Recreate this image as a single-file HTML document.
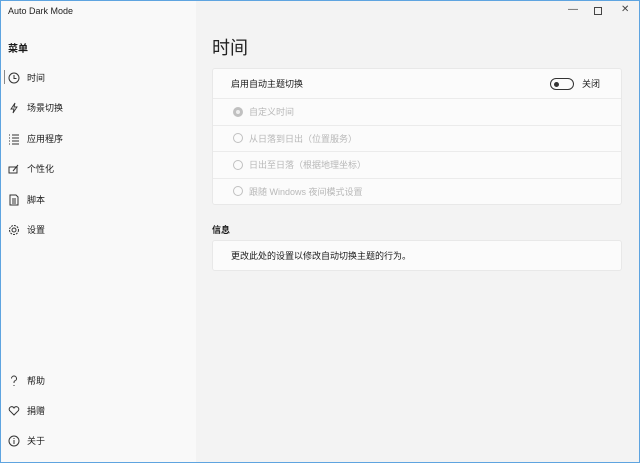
<!DOCTYPE html>
<html><head><meta charset="utf-8"><style>
*{margin:0;padding:0;box-sizing:border-box}
body{width:640px;height:463px;overflow:hidden;font-family:"Liberation Sans","Noto Sans CJK SC",sans-serif;font-size:9px;color:#1a1a1a;background:#f3f3f3;position:relative}
.win{position:absolute;left:0;top:0;width:640px;height:463px;border:1px solid #5ea4e0}
.side{position:absolute;left:1px;top:1px;width:195px;height:461px;background:#f9f9f9}
.title{position:absolute;left:7px;top:5px;font-size:9px;color:#222}
.ctl{position:absolute;top:4px;font-size:10px;color:#444}
.menu{position:absolute;left:7px;top:39px;font-size:10px;font-weight:bold}
.item{position:absolute;left:7px;font-size:9px;display:flex;align-items:center}
.item svg{width:12px;height:12px;margin-right:7px}
.sel{position:absolute;left:3px;top:69px;width:1px;height:14px;background:#888}
h1{position:absolute;left:212px;top:34px;font-size:18px;font-weight:normal;color:#222}
.card{position:absolute;left:212px;width:410px;background:#fbfbfb;border:1px solid #e8e8e8;border-radius:3px}
.row{height:26.5px;border-top:1px solid #ebebeb;display:flex;align-items:center;padding-left:20px;color:#b8b8b8}
.radio{width:10px;height:10px;border:1px solid #c0c0c0;border-radius:50%;margin-right:6px}
</style></head><body>
<div class="win"></div>
<div class="side">
<div class="title">Auto Dark Mode</div>
<div class="menu">菜单</div>
<div class="sel"></div>
<div class="item" style="top:70px"><svg viewBox="0 0 12 12"><circle cx="6" cy="6" r="5" fill="none" stroke="#333" stroke-width="1"/><path d="M6 3v3.5h2.5" fill="none" stroke="#333"/></svg>时间</div>
<div class="item" style="top:100px"><svg viewBox="0 0 12 12"><path d="M7 1L3 7h3l-1 4 4-6H6z" fill="none" stroke="#333" stroke-width=".9"/></svg>场景切换</div>
<div class="item" style="top:131px"><svg viewBox="0 0 12 12"><path d="M1 2h1M1 5h1M1 8h1M1 11h1M4 2h7M4 5h7M4 8h7M4 11h7" stroke="#333"/></svg>应用程序</div>
<div class="item" style="top:161px"><svg viewBox="0 0 12 12"><rect x="1" y="4" width="8" height="6" fill="none" stroke="#333"/><path d="M5 8l5-6" stroke="#333"/></svg>个性化</div>
<div class="item" style="top:192px"><svg viewBox="0 0 12 12"><path d="M2 1h6l2 2v8H2z" fill="none" stroke="#333"/><path d="M4 5h4M4 7h4M4 9h4" stroke="#333"/></svg>脚本</div>
<div class="item" style="top:222px"><svg viewBox="0 0 12 12"><circle cx="6" cy="6" r="4.5" fill="none" stroke="#333" stroke-dasharray="2 1"/><circle cx="6" cy="6" r="2" fill="none" stroke="#333"/></svg>设置</div>
<div class="item" style="top:373px"><svg viewBox="0 0 12 12"><path d="M3.5 3.5a2.5 2.5 0 1 1 3 2.5c-.5.3-.5 1-.5 2M6 10v1" fill="none" stroke="#333"/></svg>帮助</div>
<div class="item" style="top:403px"><svg viewBox="0 0 12 12"><path d="M6 10L1.5 5.5a2.3 2.3 0 0 1 4.5-2.5a2.3 2.3 0 0 1 4.5 2.5z" fill="none" stroke="#333"/></svg>捐赠</div>
<div class="item" style="top:433px"><svg viewBox="0 0 12 12"><circle cx="6" cy="6" r="5" fill="none" stroke="#333"/><path d="M6 5v4M6 3v1" stroke="#333"/></svg>关于</div>
</div>
<div class="ctl" style="left:568px">—</div>
<div class="ctl" style="left:594px"><span style="display:inline-block;width:8px;height:8px;border:1px solid #444;margin-top:3px"></span></div>
<div class="ctl" style="left:621px">✕</div>
<h1>时间</h1>
<div class="card" style="top:68px;height:137px">
<div style="height:29px;display:flex;align-items:center;padding-left:18px;position:relative">启用自动主题切换
<span style="position:absolute;left:337px;top:9px;width:24px;height:12px;border:1px solid #333;border-radius:6px"><span style="position:absolute;left:3px;top:2.5px;width:5px;height:5px;border-radius:50%;background:#333"></span></span>
<span style="position:absolute;left:369px">关闭</span></div>
<div class="row"><span class="radio" style="border:3px solid #c0c0c0;background:#eee"></span>自定义时间</div>
<div class="row"><span class="radio"></span>从日落到日出（位置服务）</div>
<div class="row"><span class="radio"></span>日出至日落（根据地理坐标）</div>
<div class="row"><span class="radio"></span>跟随 Windows 夜间模式设置</div>
</div>
<div style="position:absolute;left:212px;top:223px;font-weight:bold">信息</div>
<div class="card" style="top:240px;height:31px;display:flex;align-items:center;padding-left:18px">更改此处的设置以修改自动切换主题的行为。</div>
</body></html>
